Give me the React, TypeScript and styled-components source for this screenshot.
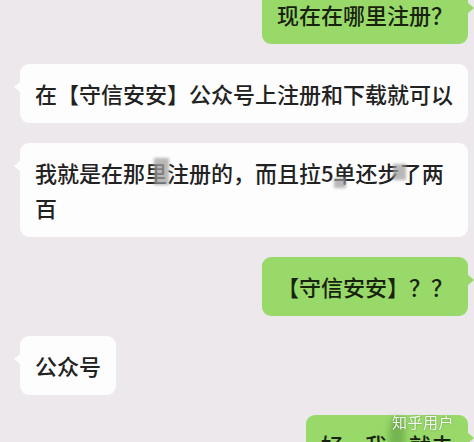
import styled, { createGlobalStyle, css } from 'styled-components';

const GlobalStyle = createGlobalStyle`
  html, body {
    margin: 0;
    padding: 0;
    background: #ece8eb;
  }
  body {
    width: 474px;
    height: 442px;
    overflow: hidden;
    font-family: 'Noto Sans CJK SC', 'Noto Sans', sans-serif;
  }
`;

type Side = 'left' | 'right';

const Chat = styled.main`
  display: flex;
  flex-direction: column;
  gap: 20px;
  margin-top: -15px;
  padding: 0 6px 0 20px;
`;

const Bubble = styled.div<{ $side: Side }>`
  position: relative;
  max-width: 449px;
  box-sizing: border-box;
  padding: 12px 15px;
  border-radius: 9px;
  font-size: 22px;
  font-weight: 500;
  line-height: 35px;
  color: #222;

  &::before {
    content: '';
    position: absolute;
    top: 17px;
    border-top: 6px solid transparent;
    border-bottom: 6px solid transparent;
  }

  ${({ $side }) =>
    $side === 'left'
      ? css`
          align-self: flex-start;
          background: #fdfdfd;
          &::before {
            left: -6px;
            border-right: 7px solid #fdfdfd;
          }
        `
      : css`
          align-self: flex-end;
          background: #98d96a;
          color: #18230f;
          &::before {
            right: -6px;
            border-left: 7px solid #98d96a;
          }
        `}
`;

// grey pixelated cover from the original screenshot
const Mosaic = styled.span<{ $left: number; $top: number; $width: number; $height: number }>`
  position: relative;

  &::after {
    content: '';
    position: absolute;
    left: ${(p) => p.$left}%;
    top: ${(p) => p.$top}%;
    width: ${(p) => p.$width}%;
    height: ${(p) => p.$height}%;
    background: rgba(160, 160, 160, 0.75);
    filter: blur(1.5px);
  }
`;

const Blob = styled.span`
  position: relative;
  color: transparent;

  &::after {
    content: '';
    position: absolute;
    left: 10%;
    top: -30%;
    width: 70%;
    height: 130%;
    border-radius: 40%;
    background: rgba(90, 150, 60, 0.55);
    filter: blur(3px);
  }
`;

const Watermark = styled.div`
  position: fixed;
  right: 20px;
  bottom: 10px;
  font-family: 'Noto Sans CJK SC', sans-serif;
  font-size: 15px;
  letter-spacing: 0.5px;
  color: rgba(255, 255, 255, 0.9);
  text-shadow: 0 0 2px rgba(0, 0, 0, 0.35);
`;

const messages: { side: Side; text: React.ReactNode }[] = [
  { side: 'right', text: '现在在哪里注册？' },
  { side: 'left', text: '在【守信安安】公众号上注册和下载就可以' },
  {
    side: 'left',
    text: (
      <>
        我就是在那<Mosaic $left={40} $top={5} $width={70} $height={85}>里</Mosaic>注册的，而且拉5
        <Mosaic $left={0} $top={70} $width={55} $height={30}>单</Mosaic>还
        <Mosaic $left={70} $top={25} $width={60} $height={50}>步</Mosaic>了两百
      </>
    ),
  },
  { side: 'right', text: '【守信安安】？？' },
  { side: 'left', text: '公众号' },
  {
    side: 'right',
    text: (
      <>
        好，我<Blob>这</Blob>就去
      </>
    ),
  },
];

export default function App() {
  return (
    <>
      <GlobalStyle />
      <Chat>
        {messages.map((m, i) => (
          <Bubble key={i} $side={m.side}>
            {m.text}
          </Bubble>
        ))}
      </Chat>
      <Watermark>知乎用户</Watermark>
    </>
  );
}
